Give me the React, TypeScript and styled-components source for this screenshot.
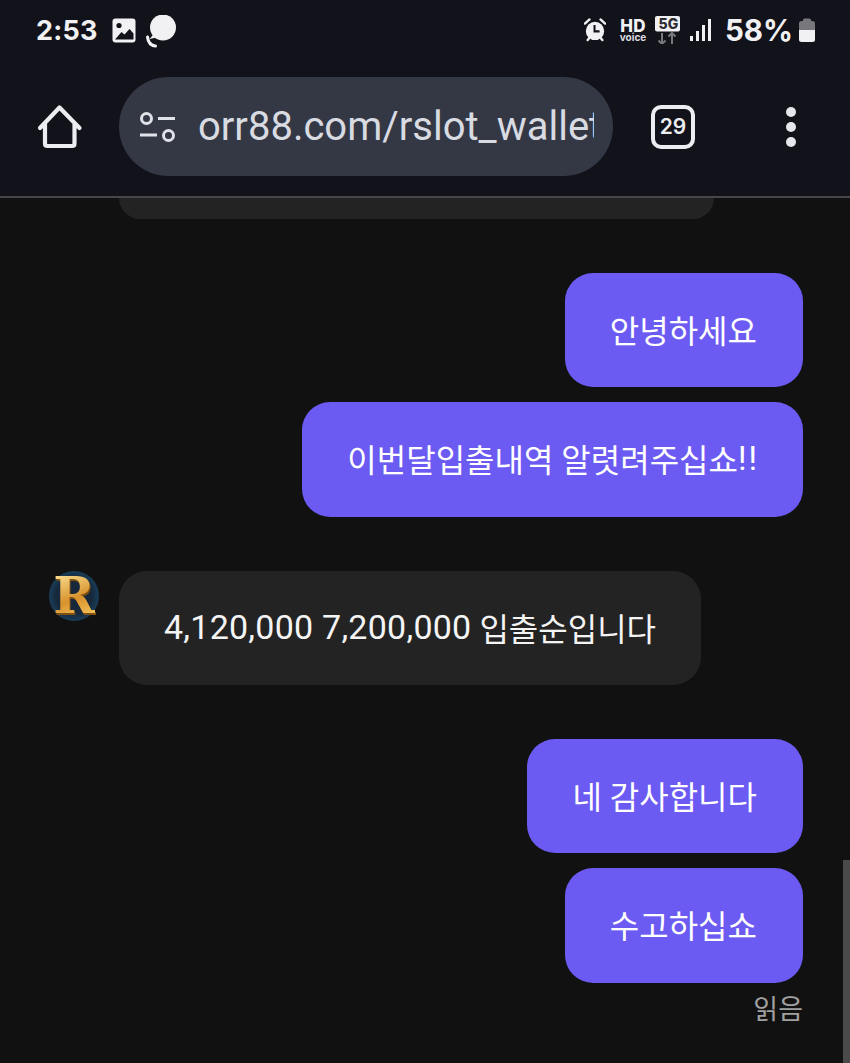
import React from "react";
import styled, { createGlobalStyle } from "styled-components";

const Global = createGlobalStyle`
  html, body { margin: 0; padding: 0; background: #111112; }
  #root { width: 850px; height: 1063px; overflow: hidden; }
`;

const Screen = styled.div`
  position: relative;
  width: 850px;
  height: 1063px;
  overflow: hidden;
  background: #111112;
  display: flex;
  flex-direction: column;
  font-family: Roboto, "Noto Sans CJK KR", sans-serif;
  color: #f1f1f4;
`;

const Header = styled.header`
  flex: none;
  background: #12121a;
  border-bottom: 2px solid #47474b;
`;

const StatusBar = styled.div`
  height: 60px;
  box-sizing: border-box;
  padding: 0 34px 0 36px;
  display: flex;
  align-items: center;
  justify-content: space-between;
`;

const StatusGroup = styled.div`
  display: flex;
  align-items: center;
`;

const Clock = styled.span`
  font-family: Inter, sans-serif;
  font-size: 27px;
  font-weight: 700;
  letter-spacing: 0.2px;
  margin-right: 14px;
`;

const Battery = styled.span`
  font-family: Inter, sans-serif;
  font-size: 29.5px;
  font-weight: 700;
  margin-left: 14px;
  margin-right: 5px;
`;

const HdBadge = styled.div`
  margin-left: 14px;
  width: 26px;
  display: flex;
  flex-direction: column;
  align-items: center;
  font-family: Inter, sans-serif;
  font-weight: 800;
`;

const HdMark = styled.span`
  font-size: 17px;
  line-height: 14px;
  letter-spacing: 0.3px;
`;

const VoiceMark = styled.span`
  font-size: 10px;
  line-height: 9px;
  font-weight: 700;
  color: #dcdce0;
`;

const Toolbar = styled.div`
  height: 136px;
  box-sizing: border-box;
  padding: 17px 0 20px 36px;
  display: flex;
  align-items: center;
`;

const UrlPill = styled.div`
  width: 494px;
  height: 99px;
  margin-left: 37px;
  box-sizing: border-box;
  padding: 0 18px 0 20px;
  border-radius: 50px;
  background: #343844;
  display: flex;
  align-items: center;
  gap: 21px;
`;

const UrlText = styled.div`
  width: 396px;
  flex: none;
  overflow: hidden;
  white-space: nowrap;
  font-size: 40px;
  line-height: 50px;
  color: #d9dbe2;
`;

const TabBadge = styled.div`
  width: 36px;
  height: 36px;
  margin-left: 38px;
  border: 4px solid #ecedf1;
  border-radius: 10px;
  display: flex;
  align-items: center;
  justify-content: center;
  font-family: Inter, sans-serif;
  font-size: 21px;
  font-weight: 600;
  color: #ecedf1;
`;

const MenuDots = styled.div`
  margin-left: 91px;
  display: flex;
  flex-direction: column;
  gap: 5px;
`;

const Dot = styled.span`
  width: 10px;
  height: 10px;
  border-radius: 50%;
  background: #e6e7ec;
`;

const Chat = styled.main`
  flex: 1;
  display: flex;
  flex-direction: column;
  padding: 0 47px 0 49px;
`;

const ClippedBubble = styled.div`
  width: 595px;
  height: 21px;
  margin-left: 70px;
  margin-bottom: 54px;
  background: #232323;
  border-radius: 0 0 28px 28px;
`;

const Outgoing = styled.div<{ $gap: number; $h: number }>`
  align-self: flex-end;
  height: ${(p) => p.$h}px;
  box-sizing: border-box;
  padding: 0 46px 3px 45px;
  margin-bottom: ${(p) => p.$gap}px;
  display: flex;
  align-items: center;
  border-radius: 28px;
  background: #6c5bf2;
  color: #fff;
  font-size: 32px;
  white-space: pre;
`;

const Bangs = styled.span`
  letter-spacing: 2px;
  margin-right: -2px;
  font-size: 33px;
`;

const IncomingRow = styled.div`
  display: flex;
  gap: 20px;
  margin-bottom: 54px;
`;

const Avatar = styled.div`
  flex: none;
  width: 50px;
  height: 50px;
  border-radius: 50%;
  background: radial-gradient(circle at 50% 50%, #16283a 50%, #1d5a86 100%);
  display: flex;
  align-items: center;
  justify-content: center;
`;

const AvatarLetter = styled.span`
  font-family: "DejaVu Serif", serif;
  font-size: 50px;
  line-height: 50px;
  font-weight: 700;
  background: linear-gradient(160deg, #f8d98a 10%, #d8922c 55%, #f0bb55 85%);
  -webkit-background-clip: text;
  background-clip: text;
  color: transparent;
  filter: drop-shadow(1px 2px 0 #7d4f12);
`;

const Incoming = styled.div`
  height: 114px;
  box-sizing: border-box;
  padding: 0 45px 3px;
  display: flex;
  align-items: center;
  border-radius: 28px;
  background: #232323;
  color: #f4f4f4;
  font-size: 32px;
  white-space: pre;
`;

const Amounts = styled.span`
  font-size: 34px;
  letter-spacing: 0.25px;
`;

const ReadMark = styled.div`
  align-self: flex-end;
  margin-top: 8px;
  font-size: 27px;
  line-height: 38px;
  color: #a0a0a0;
`;

const ScrollThumb = styled.div`
  position: absolute;
  right: 0;
  top: 860px;
  width: 7px;
  height: 203px;
  background: #4a4a4a;
`;

const ic = "#f1f1f4";

const App = () => (
  <Screen>
    <Global />
    <Header>
      <StatusBar>
        <StatusGroup>
          <Clock>2:53</Clock>
          <svg width="24" height="25" viewBox="0 0 24 25">
            <rect x="0.5" y="0.5" width="23" height="24" rx="3" fill={ic} />
            <circle cx="7" cy="7.5" r="2.6" fill="#12121a" />
            <path d="M3 21.5 L9.5 14 L12.5 16.5 L17.5 11 L21.5 15.5 V21.5Z" fill="#12121a" />
          </svg>
          <svg width="33" height="34" viewBox="0 0 33 34" style={{ marginLeft: 9, marginTop: 4 }}>
            <circle cx="18" cy="12.5" r="13" fill={ic} />
            <path d="M8 20 L4.5 24 L14 22Z" fill={ic} />
            <path d="M2.5 22 C3 27 6 30.5 10.5 31" stroke={ic} strokeWidth="3" fill="none" strokeLinecap="round" />
          </svg>
        </StatusGroup>
        <StatusGroup>
          <svg width="22" height="24" viewBox="0 0 24 26">
            <path d="M1 6 L6 1.5 M23 6 L18 1.5 M4 24 L6.5 21 M20 24 L17.5 21" stroke={ic} strokeWidth="2.6" strokeLinecap="round" />
            <circle cx="12" cy="14" r="10" fill={ic} />
            <path d="M11.5 7.5 V14.5 H17" stroke="#12121a" strokeWidth="2.2" fill="none" />
          </svg>
          <HdBadge>
            <HdMark>HD</HdMark>
            <VoiceMark>voice</VoiceMark>
          </HdBadge>
          <svg width="25" height="28" viewBox="0 0 25 28" style={{ marginLeft: 9 }}>
            <rect x="0" y="0" width="25" height="15.5" rx="2" fill={ic} />
            <text x="3.5" y="13" fontFamily="Inter, sans-serif" fontSize="14" fontWeight="800" fill="#2a2a30">5G</text>
            <path d="M7 17 V28 M3.5 24.5 L7 28 L10.5 24.5 M17 28 V17 M13.5 20.5 L17 17 L20.5 20.5" stroke="#77777c" strokeWidth="2" fill="none" />
          </svg>
          <svg width="21" height="24" viewBox="0 0 21 24" style={{ marginLeft: 10 }}>
            <rect x="0" y="18" width="3" height="5" fill={ic} />
            <rect x="6" y="13" width="3" height="10" fill={ic} />
            <rect x="12" y="7" width="3" height="16" fill={ic} />
            <rect x="18" y="1" width="3" height="22" fill={ic} />
          </svg>
          <Battery>58%</Battery>
          <svg width="18" height="26" viewBox="0 0 18 26">
            <path d="M5 3 Q5 1.5 6.5 1.5 H11.5 Q13 1.5 13 3 V4 H14.5 Q17 4 17 6.5 V13 H1 V6.5 Q1 4 3.5 4 H5Z" fill="#77777c" />
            <path d="M1 13 H17 V22.5 Q17 25 14.5 25 H3.5 Q1 25 1 22.5Z" fill={ic} />
          </svg>
        </StatusGroup>
      </StatusBar>
      <Toolbar>
        <svg width="46" height="46" viewBox="0 0 46 46" style={{ marginLeft: 1, marginRight: -1 }}>
          <path d="M3 24 L22.5 3.5 L42.5 24 M8 20 V39.5 Q8 42 10.5 42 H35 Q37.5 42 37.5 39.5 V20" fill="none" stroke="#ecedf1" strokeWidth="4.2" strokeLinecap="round" strokeLinejoin="round" />
        </svg>
        <UrlPill>
          <svg width="38" height="32" viewBox="0 0 38 32">
            <circle cx="7.5" cy="7.5" r="5" fill="none" stroke="#e0e2e9" strokeWidth="3" />
            <path d="M19 7.5 H36 M1 24 H18" stroke="#e0e2e9" strokeWidth="3" />
            <circle cx="29.5" cy="24.5" r="5" fill="none" stroke="#e0e2e9" strokeWidth="3" />
          </svg>
          <UrlText>orr88.com/rslot_wallet</UrlText>
        </UrlPill>
        <TabBadge>29</TabBadge>
        <MenuDots>
          <Dot />
          <Dot />
          <Dot />
        </MenuDots>
      </Toolbar>
    </Header>
    <Chat>
      <ClippedBubble />
      <Outgoing $h={114} $gap={15}>안녕하세요</Outgoing>
      <Outgoing $h={115} $gap={54}>
        이번달입출내역 알렷려주십쇼<Bangs>!!</Bangs>
      </Outgoing>
      <IncomingRow>
        <Avatar>
          <AvatarLetter>R</AvatarLetter>
        </Avatar>
        <Incoming>
          <Amounts>4,120,000 7,200,000</Amounts> 입출순입니다
        </Incoming>
      </IncomingRow>
      <Outgoing $h={114} $gap={15}>네 감사합니다</Outgoing>
      <Outgoing $h={115} $gap={0}>수고하십쇼</Outgoing>
      <ReadMark>읽음</ReadMark>
    </Chat>
    <ScrollThumb />
  </Screen>
);

export default App;
